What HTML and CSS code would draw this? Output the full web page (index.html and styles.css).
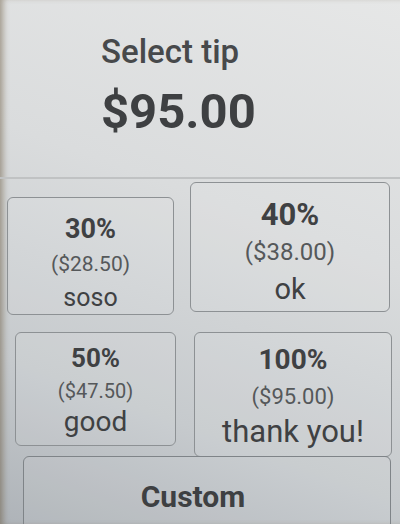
FILE: index.html
```html
<!DOCTYPE html>
<html lang="en">
<head>
<meta charset="UTF-8">
<meta name="viewport" content="width=device-width, initial-scale=1.0">
<title>Select tip</title>
<link rel="stylesheet" href="styles.css">
</head>
<body>

<div class="screen">
    <div class="header">
        <div class="title">Select tip</div>
        <div class="total">$95.00</div>
    </div>

    <div class="tips">
        <div class="row row-top">
            <button class="tip tip-30">
                <span class="pct">30%</span>
                <span class="amt">($28.50)</span>
                <span class="label">soso</span>
            </button>
            <button class="tip tip-40">
                <span class="pct">40%</span>
                <span class="amt">($38.00)</span>
                <span class="label">ok</span>
            </button>
        </div>
        <div class="row row-bottom">
            <button class="tip tip-50">
                <span class="pct">50%</span>
                <span class="amt">($47.50)</span>
                <span class="label">good</span>
            </button>
            <button class="tip tip-100">
                <span class="pct">100%</span>
                <span class="amt">($95.00)</span>
                <span class="label">thank you!</span>
            </button>
        </div>
        <button class="custom">Custom</button>
    </div>
</div>

</body>
</html>
```

FILE: styles.css
```css
html, body {
    margin: 0;
    padding: 0;
}
body {
    width: 400px;
    height: 524px;
    overflow: hidden;
    font-family: Roboto, "Liberation Sans", Arial, sans-serif;
    color: #3f4143;
    background: linear-gradient(200deg, #e6e7e7 0%, #dadcdd 40%, #c6cacd 75%, #aeb3b8 100%);
}
.screen {
    height: 524px;
    box-shadow: inset 6px 0 6px -3px rgba(90, 70, 40, 0.45);
}
.header {
    height: 179px;
    box-sizing: border-box;
    padding: 30px 0 0 101px;
    border-bottom: 2px solid #c0c2c3;
}
.title {
    font-size: 33px;
    font-weight: 500;
    line-height: 44px;
    color: #47494b;
}
.total {
    font-size: 49px;
    font-weight: 700;
    line-height: 56px;
    margin-top: 10px;
    color: #3e4042;
}
.tips {
    display: flex;
    flex-direction: column;
}
.row {
    display: flex;
    align-items: flex-start;
}
.tip {
    display: flex;
    flex-direction: column;
    align-items: center;
    box-sizing: border-box;
    padding: 0;
    font-family: inherit;
    color: inherit;
    background: rgba(255, 255, 255, 0.08);
    border: 1.5px solid #8d9194;
    border-radius: 6px;
}
.tip span {
    display: block;
}
.pct {
    font-weight: 700;
}
.amt {
    color: #55585a;
}
.row-top {
    height: 153px;
}
.tip-30 {
    width: 167px;
    height: 118px;
    margin: 18px 0 0 7px;
    padding-top: 14px;
}
.tip-30 .pct { font-size: 27px; line-height: 34px; }
.tip-30 .amt { font-size: 21px; line-height: 28px; margin-top: 4px; }
.tip-30 .label { font-size: 25px; line-height: 32px; margin-top: 4px; }

.tip-40 {
    width: 200px;
    height: 130px;
    margin: 3px 0 0 16px;
    padding-top: 13px;
}
.tip-40 .pct { font-size: 31px; line-height: 38px; }
.tip-40 .amt { font-size: 24px; line-height: 32px; margin-top: 2px; }
.tip-40 .label { font-size: 29px; line-height: 38px; margin-top: 2px; }

.row-bottom {
    height: 124px;
}
.tip-50 {
    width: 161px;
    height: 114px;
    margin-left: 15px;
    padding-top: 9px;
}
.tip-50 .pct { font-size: 26px; line-height: 32px; }
.tip-50 .amt { font-size: 20px; line-height: 28px; margin-top: 3px; }
.tip-50 .label { font-size: 28px; line-height: 34px; }

.tip-100 {
    width: 198px;
    height: 125px;
    margin-left: 18px;
    padding-top: 10px;
}
.tip-100 .pct { font-size: 28px; line-height: 34px; }
.tip-100 .amt { font-size: 22px; line-height: 30px; margin-top: 5px; }
.tip-100 .label { font-size: 31px; line-height: 36px; margin-top: 2px; }

.custom {
    width: 368px;
    height: 80px;
    margin-left: 23px;
    padding: 0 28px 0 0;
    font-family: inherit;
    font-size: 30px;
    font-weight: 700;
    color: #3e4042;
    background: rgba(255, 255, 255, 0.06);
    border: 1.5px solid #7f8488;
    border-radius: 6px;
}
```
